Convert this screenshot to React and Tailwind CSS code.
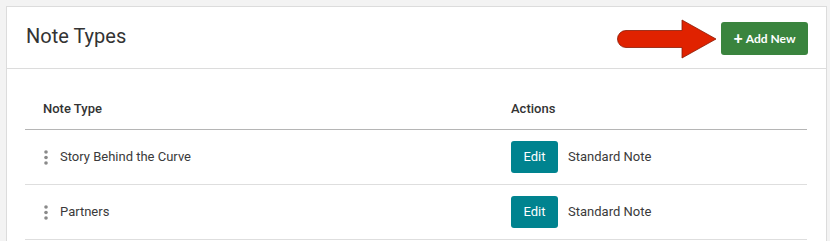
import React from 'react';

const rows = [
  { name: 'Story Behind the Curve', kind: 'Standard Note' },
  { name: 'Partners', kind: 'Standard Note' },
];

function DragHandle() {
  return (
    <svg width="6" height="15" viewBox="0 0 6 15" className="shrink-0">
      <circle cx="3" cy="2" r="1.8" fill="#8a8a8a" />
      <circle cx="3" cy="7.5" r="1.8" fill="#8a8a8a" />
      <circle cx="3" cy="13" r="1.8" fill="#8a8a8a" />
    </svg>
  );
}

function PointerArrow() {
  return (
    <svg width="102" height="40" viewBox="0 0 102 40" className="shrink-0">
      <path
        d="M10 11.5 H66 V1 L100 20 L66 39 V28.5 H10 A8.5 8.5 0 0 1 10 11.5 Z"
        fill="#e02200"
        stroke="#8a1a05"
        strokeWidth="0.8"
      />
    </svg>
  );
}

export default function App() {
  return (
    <div className="min-h-[241px] bg-[#f3f3f3] pt-[6px] pl-[6px] font-['Roboto',sans-serif] text-[#333]">
      <div className="w-[821px] h-[235px] bg-white border border-[#dcdcdc] border-b-0">
        {/* Header */}
        <div className="h-[62px] flex items-center justify-between pl-[19px] pr-[18px] border-b border-[#dcdcdc]">
          <h2 className="text-[20px] leading-none text-[#333] pb-[3px]">Note Types</h2>
          <div className="flex items-center gap-[3px] pt-[2px]">
            <PointerArrow />
            <button className="w-[87px] h-[33px] rounded-[3px] bg-[#3a843e] text-white flex items-center justify-center gap-[3px] font-['Lato',sans-serif] font-bold text-[12px]">
              <span className="text-[16px] leading-none font-black -mt-[1px]">+</span>
              <span>Add New</span>
            </button>
          </div>
        </div>

        {/* Table */}
        <div className="pl-[18px] pr-[19px] pt-[19px]">
          <div className="flex items-center h-[42px] border-b border-[#b5b5b5] text-[13px] font-medium">
            <div className="w-[486px] pl-[18px]">Note Type</div>
            <div>Actions</div>
          </div>
          {rows.map((row) => (
            <div
              key={row.name}
              className="flex items-center h-[55px] border-b border-[#dedede] text-[13px] text-[#3a3a3a]"
            >
              <div className="w-[486px] pl-[18px] flex items-center gap-[11px]">
                <DragHandle />
                <span>{row.name}</span>
              </div>
              <div className="flex items-center gap-[10px]">
                <button className="w-[47px] h-[32px] rounded-[3px] bg-[#00838f] text-white text-[13px]">
                  Edit
                </button>
                <span>{row.kind}</span>
              </div>
            </div>
          ))}
        </div>
      </div>
    </div>
  );
}
